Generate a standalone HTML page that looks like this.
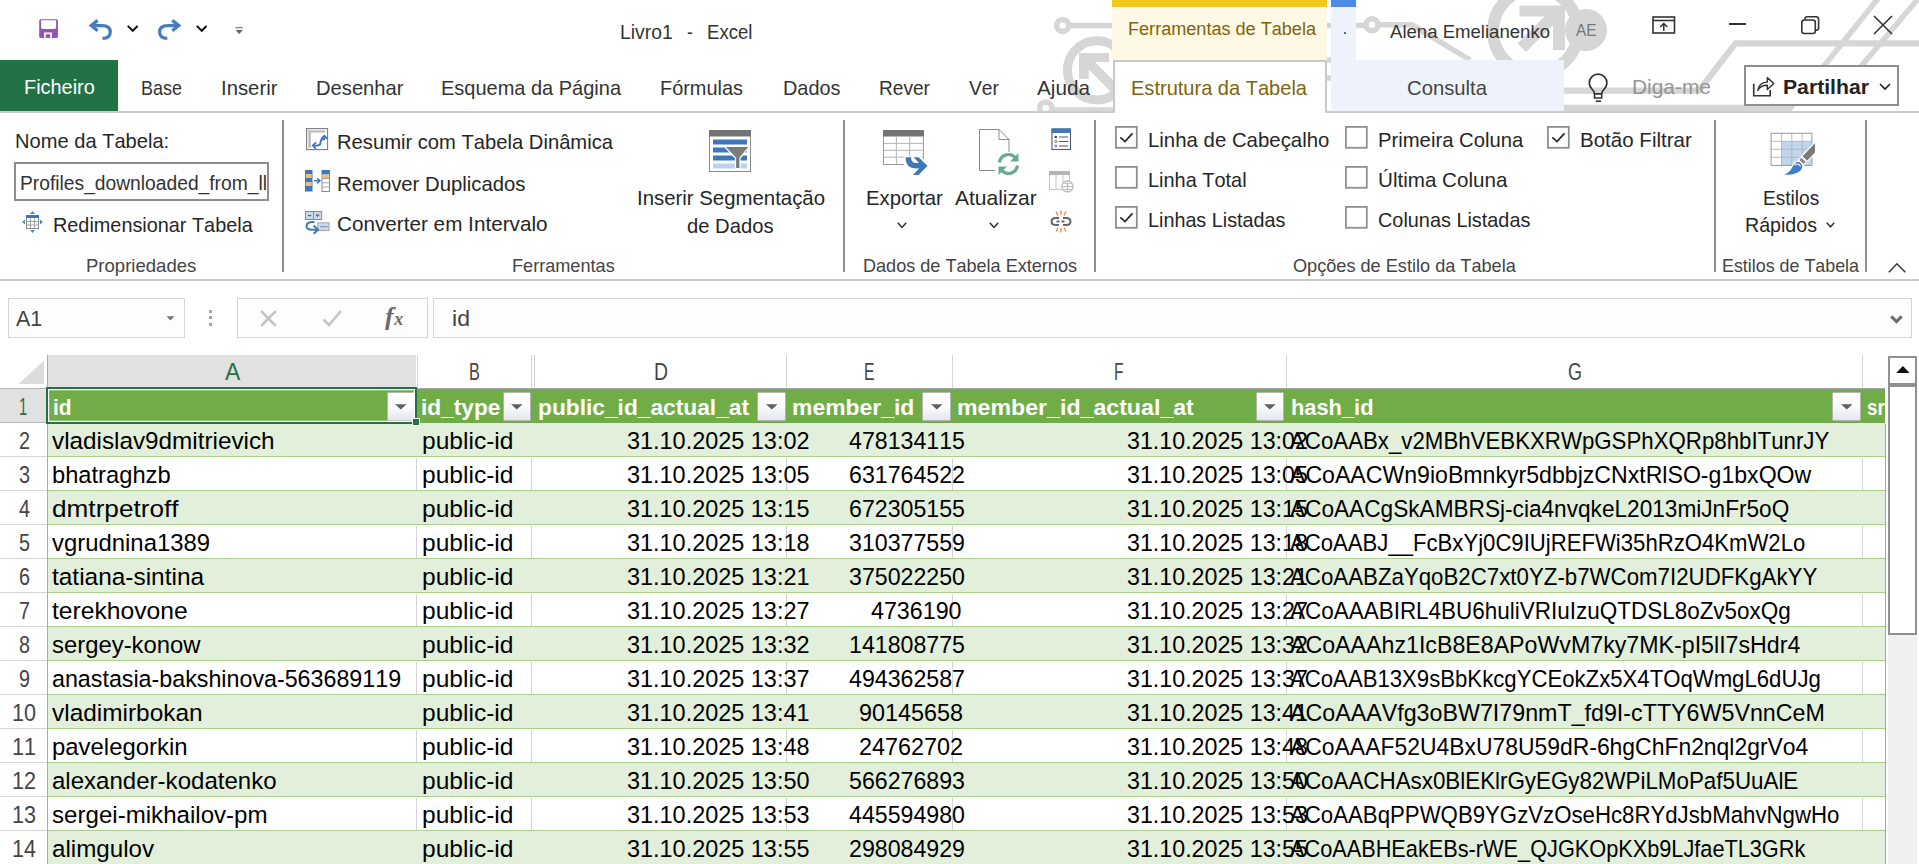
<!DOCTYPE html>
<html><head><meta charset="utf-8"><title>Livro1 - Excel</title>
<style>
html,body{margin:0;padding:0;overflow:hidden;}
body{width:1919px;height:864px;overflow:hidden;background:#fff;position:relative;font-family:"Liberation Sans",sans-serif;}
.t{position:absolute;white-space:pre;line-height:1;transform-origin:0 0;font-kerning:none;}
</style></head><body>
<svg style="position:absolute;left:0px;top:0px;" width="1919" height="112" viewBox="0 0 1919 112">
<g fill="none" stroke="#d6d6d6" stroke-width="5.5" stroke-linecap="butt" stroke-linejoin="miter">
  <circle cx="1062.6" cy="25.4" r="6"/>
  <path d="M1068.5 25.4 H1112"/>
  <path d="M1327 25.4 H1366"/>
  <circle cx="1372" cy="24.8" r="6"/>
  <path d="M1378 24.8 H1412 L1470 60"/>
  <circle cx="1097" cy="70.3" r="29.6" stroke-width="9"/>
  <circle cx="1045.7" cy="108" r="6"/>
  <path d="M1052 110 H1113"/>
  <path d="M1326 60 H1332 M1326 78 H1332"/>
  <circle cx="1535.5" cy="31" r="42.5" stroke-width="12"/>
  <path d="M1564 90.7 H1699 L1735.5 43.4 H1919" stroke-width="6.2"/>
  <path d="M1564 108 H1790.5" stroke-width="6.5"/><path d="M1788 111 L1880 -4"/>
  <path d="M1923 -7 L1858 70"/>
</g>
<g fill="#d6d6d6" stroke="none">
  <path d="M1079 53 H1109 V62 H1095 L1120 87 L1113 94 L1088.8 69.5 V79 H1079 Z"/>
  <path d="M1519.5 5.4 H1565 V50 H1553 V25 L1526 52 L1517.5 43.5 L1544.5 16.6 H1519.5 Z"/>
</g></svg>
<svg style="position:absolute;left:39px;top:18.8px;" width="19.2" height="19.2" viewBox="0 0 19.2 19.2"><rect x="0.2" y="0.2" width="18.7" height="18.8" rx="1.6" fill="#9153b5"/><path d="M2.1 1.3 H17.1 V8.6 Q17.1 10.1 15.6 10.1 H3.6 Q2.1 10.1 2.1 8.6 Z" fill="#fff"/><path d="M5 19 V13.6 H13 V19 H11.3 V15.2 H6.7 V19 Z" fill="#fff"/></svg>
<svg style="position:absolute;left:88px;top:18px;" width="26" height="23" viewBox="0 0 26 23"><path d="M3.4 7.6 H14 Q22.3 7.6 22.3 14 Q22.3 20.3 14.6 20.3" fill="none" stroke="#467ebd" stroke-width="3.2"/><path d="M9.6 2.4 L3.2 7.6 L9.6 12.8" fill="none" stroke="#467ebd" stroke-width="3.3"/></svg>
<svg style="position:absolute;left:126.6px;top:25.4px;" width="11.4" height="7.4" viewBox="0 0 11.4 7.4"><path d="M0.8 0.9 L5.7 5.8 L10.6 0.9" fill="none" stroke="#111" stroke-width="2"/></svg>
<svg style="position:absolute;left:157px;top:18px;" width="26" height="23" viewBox="0 0 26 23"><path d="M21.5 7.6 H10.9 Q2.6 7.6 2.6 14 Q2.6 20.3 10.3 20.3" fill="none" stroke="#467ebd" stroke-width="3.2"/><path d="M15.3 2.4 L21.7 7.6 L15.3 12.8" fill="none" stroke="#467ebd" stroke-width="3.3"/></svg>
<svg style="position:absolute;left:195.6px;top:25.4px;" width="11.4" height="7.4" viewBox="0 0 11.4 7.4"><path d="M0.8 0.9 L5.7 5.8 L10.6 0.9" fill="none" stroke="#111" stroke-width="2"/></svg>
<svg style="position:absolute;left:234.6px;top:27px;" width="8.4" height="8" viewBox="0 0 8.4 8"><rect x="0.4" y="0.2" width="7.4" height="1" fill="#666"/><path d="M0.5 3 H7.9 L4.2 7 Z" fill="#666"/></svg>
<span class="t" style="left:619.6px;top:21px;font-size:21px;color:#333;transform:scaleX(0.9213);">Livro1</span>
<span class="t" style="left:687.3px;top:21px;font-size:21px;color:#333;transform:scaleX(0.8143);">-</span>
<span class="t" style="left:707.3px;top:21px;font-size:21px;color:#333;transform:scaleX(0.8840);">Excel</span>
<div style="position:absolute;left:1112px;top:0px;width:215px;height:60px;background:#fff8e4;"></div>
<div style="position:absolute;left:1112px;top:0px;width:215px;height:7px;background:#f2c81c;"></div>
<span class="t" style="left:1127.5px;top:20px;font-size:18px;color:#80640c;transform:scaleX(1.0048);">Ferramentas de Tabela</span>
<div style="position:absolute;left:1331px;top:0px;width:25px;height:60px;background:#eef3fb;"></div>
<div style="position:absolute;left:1331px;top:0px;width:25px;height:7px;background:#4d8ae6;"></div>
<div style="position:absolute;left:1344px;top:32px;width:2px;height:2px;background:#3b6fc4;"></div>
<span class="t" style="left:1390px;top:22px;font-size:19px;color:#333;transform:scaleX(0.9773);">Alena Emelianenko</span>
<div style="position:absolute;left:1565px;top:9px;width:42px;height:42px;border-radius:50%;background:#d6d6d6;"></div>
<span class="t" style="left:1576px;top:23px;font-size:16px;color:#777;transform:scaleX(0.9605);">AE</span>
<svg style="position:absolute;left:1652px;top:15px;" width="24" height="20" viewBox="0 0 24 20"><rect x="1" y="2" width="21.5" height="16" fill="none" stroke="#333" stroke-width="1.6"/><path d="M1 5.5 H22.5" stroke="#333" stroke-width="1.6"/><path d="M11.8 16 V8.5 M8.3 12 L11.8 8.5 L15.3 12" fill="none" stroke="#333" stroke-width="1.5"/></svg>
<div style="position:absolute;left:1729px;top:23.2px;width:17px;height:1.6px;background:#333;"></div>
<svg style="position:absolute;left:1800px;top:15px;" width="20" height="20" viewBox="0 0 20 20"><rect x="1.8" y="5" width="13.5" height="13.5" rx="2.5" fill="none" stroke="#333" stroke-width="1.6"/><path d="M5 4.5 V4 Q5 1.8 7.2 1.8 H16 Q18.6 1.8 18.6 4.4 V13 Q18.6 15.2 16.5 15.2 H16" fill="none" stroke="#333" stroke-width="1.6"/></svg>
<svg style="position:absolute;left:1873px;top:15px;" width="20" height="20" viewBox="0 0 20 20"><path d="M1 1 L19 19 M19 1 L1 19" stroke="#333" stroke-width="1.6"/></svg>
<div style="position:absolute;left:0px;top:60px;width:118px;height:51px;background:#217346;"></div>
<span class="t" style="left:24.2px;top:76px;font-size:21px;color:#fff;transform:scaleX(0.9478);">Ficheiro</span>
<span class="t" style="left:140.5px;top:77px;font-size:21px;color:#333;transform:scaleX(0.8564);">Base</span>
<span class="t" style="left:221px;top:77px;font-size:21px;color:#333;transform:scaleX(0.9681);">Inserir</span>
<span class="t" style="left:315.5px;top:77px;font-size:21px;color:#333;transform:scaleX(0.9609);">Desenhar</span>
<span class="t" style="left:441px;top:77px;font-size:21px;color:#333;transform:scaleX(0.9517);">Esquema da Página</span>
<span class="t" style="left:660px;top:77px;font-size:21px;color:#333;transform:scaleX(0.9482);">Fórmulas</span>
<span class="t" style="left:782.5px;top:77px;font-size:21px;color:#333;transform:scaleX(0.9472);">Dados</span>
<span class="t" style="left:879px;top:77px;font-size:21px;color:#333;transform:scaleX(0.9102);">Rever</span>
<span class="t" style="left:968.5px;top:77px;font-size:21px;color:#333;transform:scaleX(0.9178);">Ver</span>
<span class="t" style="left:1036.5px;top:77px;font-size:21px;color:#333;transform:scaleX(0.9866);">Ajuda</span>
<div style="position:absolute;left:0px;top:111px;width:1919px;height:2px;background:#cdcdcd;"></div>
<div style="position:absolute;left:1113px;top:60px;width:210px;height:51px;background:#fff;border:2px solid #c9c9c9;border-bottom:none;"></div>
<span class="t" style="left:1130.5px;top:77px;font-size:21px;color:#80640c;transform:scaleX(0.9543);">Estrutura da Tabela</span>
<div style="position:absolute;left:1331px;top:60px;width:233px;height:50.5px;background:#eef3fb;"></div>
<span class="t" style="left:1406.5px;top:77px;font-size:21px;color:#444;transform:scaleX(0.9651);">Consulta</span>
<svg style="position:absolute;left:1586px;top:73px;" width="24" height="30" viewBox="0 0 24 30"><path d="M8.5 20.9 Q8.3 18.2 6.4 16.6 A8.8 8.8 0 1 1 17.8 16.6 Q15.9 18.2 15.7 20.9" fill="none" stroke="#333" stroke-width="1.7"/><path d="M8.5 20.9 H15.7 V25 H8.5 Z" fill="none" stroke="#333" stroke-width="1.6"/><path d="M9.8 28.2 H15" stroke="#333" stroke-width="1.6"/></svg>
<span class="t" style="left:1632px;top:77px;font-size:20.3px;color:#949494;transform:scaleX(1.0308);">Diga-me</span>
<div style="position:absolute;left:1744px;top:65px;width:151px;height:37px;background:#fff;border:2px solid #8e8e8e;"></div>
<svg style="position:absolute;left:1750.6px;top:73.5px;" width="25" height="23" viewBox="0 0 26 24"><path d="M2.8 10.3 V22.7 H20 V16.8" fill="none" stroke="#333" stroke-width="1.7"/><path d="M7 17 Q8.5 8.5 17 8.5 V3.8 L23.8 10 L17 16.2 V11.8 Q10.5 11.5 7 17 Z" fill="none" stroke="#333" stroke-width="1.5" stroke-linejoin="round"/></svg>
<span class="t" style="left:1782.6px;top:76px;font-size:21px;color:#222;font-weight:700;transform:scaleX(1.0082);">Partilhar</span>
<svg style="position:absolute;left:1879px;top:83px;" width="12" height="8" viewBox="0 0 12 8"><path d="M1 1 L6 6 L11 1" fill="none" stroke="#222" stroke-width="1.6"/></svg>
<span class="t" style="left:15.3px;top:131px;font-size:20.3px;color:#262626;transform:scaleX(0.9911);">Nome da Tabela:</span>
<div style="position:absolute;left:14px;top:162.3px;width:251.4px;height:34.8px;background:#fff;border:2px solid #8e8e8e;"></div>
<div style="position:absolute;left:0;top:0;width:265.8px;height:864px;overflow:hidden;"><span class="t" style="left:20px;top:174px;font-size:19.5px;color:#333;transform:scaleX(0.9864);">Profiles_downloaded_from_ll</span></div>
<svg style="position:absolute;left:22px;top:211px;" width="21" height="22" viewBox="0 0 21 22"><rect x="4.5" y="4.5" width="12" height="13" fill="#fff" stroke="#8a8a8a" stroke-width="1"/>
<rect x="4" y="4" width="13" height="3" fill="#3f78b9"/>
<path d="M4.5 10.5 H16.5 M4.5 14 H16.5 M8.5 7 V17.5 M12.5 7 V17.5" stroke="#9a9a9a" stroke-width="0.9"/>
<path d="M10.5 0 L13 3 H8 Z M10.5 22 L13 19 H8 Z M0 11 L3 8.5 V13.5 Z M21 11 L18 8.5 V13.5 Z" fill="#4a86c8"/></svg>
<span class="t" style="left:53.3px;top:215px;font-size:20.3px;color:#262626;transform:scaleX(0.9786);">Redimensionar Tabela</span>
<span class="t" style="left:86px;top:257px;font-size:18.6px;color:#444;transform:scaleX(0.9972);">Propriedades</span>
<div style="position:absolute;left:282px;top:120px;width:2px;height:152px;background:#8e8e8e;"></div>
<svg style="position:absolute;left:306px;top:128px;" width="22.5" height="22.5" viewBox="0 0 22.5 22.5"><rect x="0.6" y="0.6" width="21" height="21" fill="#fff" stroke="#7d7d7d" stroke-width="1.1"/>
<rect x="2.3" y="2.3" width="17" height="2.2" fill="#bdbdbd"/><rect x="2.3" y="2.3" width="2.6" height="17.4" fill="#bdbdbd"/>
<path d="M7.2 17.6 H10.5 Q14.6 17.6 14.6 14.2 Q14.6 11 18.3 11 V8.3" fill="none" stroke="#3f78b9" stroke-width="1.9"/>
<path d="M10 14.3 L6.8 17.6 L10 20.8 M15.2 10.8 L18.3 7.7 L21.4 10.8" fill="none" stroke="#3f78b9" stroke-width="1.8"/></svg>
<span class="t" style="left:336.7px;top:132px;font-size:20.3px;color:#262626;transform:scaleX(0.9954);">Resumir com Tabela Dinâmica</span>
<svg style="position:absolute;left:304.5px;top:170px;" width="25" height="22" viewBox="0 0 25 22"><rect x="0" y="0" width="7.5" height="21.5" fill="#3f78b9"/>
<rect x="0.8" y="4" width="6" height="4" fill="#f0c070"/><rect x="0.8" y="12" width="6" height="4" fill="#f0c070"/>
<rect x="17" y="0" width="7.5" height="21.5" fill="#fff" stroke="#8a8a8a" stroke-width="1"/>
<rect x="17" y="0" width="7.5" height="4.5" fill="#3f78b9"/><rect x="17.6" y="4.6" width="6.3" height="3.6" fill="#f0c070"/>
<path d="M17 8.5 H24.5 M17 12.8 H24.5 M17 17 H24.5" stroke="#9a9a9a" stroke-width="0.9"/>
<path d="M9 10.8 H14.5 M12.3 8.2 L15 10.8 L12.3 13.4" fill="none" stroke="#3f78b9" stroke-width="1.5"/></svg>
<span class="t" style="left:336.7px;top:174px;font-size:20.3px;color:#262626;transform:scaleX(1.0013);">Remover Duplicados</span>
<svg style="position:absolute;left:305px;top:211px;" width="24.5" height="24" viewBox="0 0 24.5 24"><rect x="0.5" y="0.5" width="16.2" height="8" fill="#c9dbef" stroke="#8a8a8a" stroke-width="1"/>
<path d="M8.5 0.5 V8.5" stroke="#8a8a8a" stroke-width="1"/><path d="M2.8 4.6 H6.2" stroke="#555" stroke-width="1.1"/><path d="M10.3 3.4 H14.7 L12.5 6 Z" fill="#555"/>
<rect x="12.8" y="11.8" width="11.2" height="7.8" fill="#c9dbef" stroke="#9a9a9a" stroke-width="0.9"/>
<path d="M15 15.7 H22.5" stroke="#7a8ea8" stroke-width="1"/>
<path d="M9.5 11 Q1.5 10.5 1.5 15 Q1.5 18.7 7 18.7 H12" fill="none" stroke="#3f78b9" stroke-width="2"/>
<path d="M8.6 14.6 L13 18.7 L8.6 22.8" fill="none" stroke="#3f78b9" stroke-width="2"/></svg>
<span class="t" style="left:336.7px;top:214px;font-size:20.3px;color:#262626;transform:scaleX(1.0205);">Converter em Intervalo</span>
<span class="t" style="left:512.3px;top:257px;font-size:18.6px;color:#444;transform:scaleX(0.9743);">Ferramentas</span>
<svg style="position:absolute;left:709px;top:130px;" width="42" height="42" viewBox="0 0 42 42"><rect x="0.5" y="0.5" width="41" height="41" fill="#fff" stroke="#8a8a8a" stroke-width="1"/>
<rect x="0" y="0" width="42" height="6.5" fill="#737373"/>
<rect x="4" y="9.5" width="34" height="5" fill="#3f78b9"/>
<rect x="4" y="17.5" width="34" height="5" fill="#3f78b9"/>
<rect x="4" y="25.5" width="34" height="5" fill="#3f78b9"/>
<rect x="4" y="33.5" width="34" height="5" fill="#bcd3ea"/>
<path d="M15.5 16.5 H40.5 L31 28 V38.5 H26.5 V28 Z" fill="#7a7a7a" stroke="#fff" stroke-width="1.2"/></svg>
<span class="t" style="left:636.7px;top:188px;font-size:20.3px;color:#262626;transform:scaleX(1.0046);">Inserir Segmentação</span>
<span class="t" style="left:686.7px;top:216px;font-size:20.3px;color:#262626;transform:scaleX(0.9974);">de Dados</span>
<div style="position:absolute;left:843px;top:120px;width:2px;height:152px;background:#8e8e8e;"></div>
<svg style="position:absolute;left:882.5px;top:130px;" width="46" height="46" viewBox="0 0 46 46"><rect x="0.5" y="0.5" width="39.9" height="34" fill="#fff" stroke="#9a9a9a" stroke-width="1"/>
<rect x="0" y="0" width="40.9" height="6.5" fill="#737373"/>
<path d="M0.5 13.4 H40.4 M0.5 20.3 H40.4 M0.5 27.2 H40.4 M13.4 6.5 V34.5 M26.6 6.5 V34.5" stroke="#b4b4b4" stroke-width="1"/>
<path d="M21 26 H37 L46 34 V46 H26 L21 36 Z" fill="#fff"/>
<path d="M25.3 27.3 Q25.3 35.8 33.5 35.8 H39" fill="none" stroke="#3f78b9" stroke-width="5.4"/>
<path d="M30.6 27.3 H35.6 L44.6 35.8 L35.6 45 H30 L38.6 35.8 Z" fill="#3f78b9"/></svg>
<span class="t" style="left:865.7px;top:188px;font-size:20.3px;color:#262626;transform:scaleX(1.0019);">Exportar</span>
<svg style="position:absolute;left:896.8px;top:221.7px;" width="10" height="6.5" viewBox="0 0 10 6.5"><path d="M0.8 0.8 L5.0 5.5 L9.2 0.8" fill="none" stroke="#333" stroke-width="1.5"/></svg>
<svg style="position:absolute;left:978px;top:128px;" width="44" height="48" viewBox="0 0 44 48"><path d="M1.5 1.5 H21 L31 11.5 V42.5 H1.5 Z" fill="#fff" stroke="#8a8a8a" stroke-width="1"/>
<path d="M21 1.5 V11.5 H31" fill="none" stroke="#8a8a8a" stroke-width="1"/>
<rect x="17" y="24" width="26" height="24" fill="#fff"/>
<path d="M21.5 34.5 A9 9 0 0 1 37.5 30" fill="none" stroke="#69aa92" stroke-width="3.2"/>
<path d="M40.5 25 V33.5 H32 Z" fill="#69aa92"/>
<path d="M39.5 37.5 A9 9 0 0 1 23.5 42" fill="none" stroke="#69aa92" stroke-width="3.2"/>
<path d="M20.5 47 V38.5 H29 Z" fill="#69aa92"/></svg>
<span class="t" style="left:955px;top:188px;font-size:20.3px;color:#262626;transform:scaleX(1.0352);">Atualizar</span>
<svg style="position:absolute;left:989px;top:221.7px;" width="10" height="6.5" viewBox="0 0 10 6.5"><path d="M0.8 0.8 L5.0 5.5 L9.2 0.8" fill="none" stroke="#333" stroke-width="1.5"/></svg>
<svg style="position:absolute;left:1051px;top:128px;" width="21" height="23" viewBox="0 0 21 23"><rect x="1" y="1" width="18.5" height="20.5" fill="#fff" stroke="#4c5a6e" stroke-width="1.1"/>
<rect x="0.5" y="0.5" width="19.5" height="4.5" fill="#3f78b9"/>
<path d="M8 9 H17 M8 13.5 H17 M8 18 H17" stroke="#555" stroke-width="1.1"/>
<circle cx="4.8" cy="9" r="1.3" fill="#444"/><circle cx="4.8" cy="13.5" r="1.1" fill="none" stroke="#555" stroke-width="0.8"/><circle cx="4.8" cy="18" r="1.1" fill="none" stroke="#555" stroke-width="0.8"/></svg>
<svg style="position:absolute;left:1049px;top:170.5px;" width="26" height="23" viewBox="0 0 26 23"><rect x="0.5" y="0.5" width="20" height="18" fill="#fff" stroke="#c4c4c4" stroke-width="1"/>
<rect x="0" y="0" width="21" height="4" fill="#b4b4b4"/>
<path d="M7 4 V18.5 M14 4 V18.5" stroke="#d0c0d8" stroke-width="1"/>
<circle cx="18.5" cy="15.5" r="5.6" fill="#fff" stroke="#b4b4b4" stroke-width="1.1"/>
<path d="M13 15.5 H24 M18.5 10 V21 M15 12 Q18.5 14 22 12 M15 19 Q18.5 17 22 19" fill="none" stroke="#b4b4b4" stroke-width="0.9"/></svg>
<svg style="position:absolute;left:1050px;top:210px;" width="22" height="23" viewBox="0 0 22 23"><path d="M9 8 H6 Q1.5 8 1.5 11.5 Q1.5 15 6 15 H9 M13 8 H16 Q20.5 8 20.5 11.5 Q20.5 15 16 15 H13" fill="none" stroke="#666" stroke-width="2"/>
<path d="M6.5 11.5 H15.5" stroke="#666" stroke-width="1.8" stroke-dasharray="3 2"/>
<path d="M11 0.5 V5 M6 1.5 L8 5.5 M16 1.5 L14 5.5 M11 22.5 V18 M6 21.5 L8 17.5 M16 21.5 L14 17.5" stroke="#e8842c" stroke-width="1.2"/></svg>
<span class="t" style="left:862.7px;top:257px;font-size:18.6px;color:#444;transform:scaleX(0.9720);">Dados de Tabela Externos</span>
<div style="position:absolute;left:1094px;top:120px;width:2px;height:152px;background:#8e8e8e;"></div>
<svg style="position:absolute;left:1115px;top:126.2px;" width="22.7" height="22.7" viewBox="0 0 22.7 22.7"><rect x="0.9" y="0.9" width="20.9" height="20.9" fill="#fff" stroke="#8f8f8f" stroke-width="1.8"/><path d="M5.3 11.3 L10 15.6 L17.5 7.4" fill="none" stroke="#2b2b2b" stroke-width="1.8"/></svg>
<span class="t" style="left:1147.8px;top:130px;font-size:20.3px;color:#262626;transform:scaleX(1.0053);">Linha de Cabeçalho</span>
<svg style="position:absolute;left:1115px;top:166.2px;" width="22.7" height="22.7" viewBox="0 0 22.7 22.7"><rect x="0.9" y="0.9" width="20.9" height="20.9" fill="#fff" stroke="#8f8f8f" stroke-width="1.8"/></svg>
<span class="t" style="left:1147.8px;top:170px;font-size:20.3px;color:#262626;transform:scaleX(0.9825);">Linha Total</span>
<svg style="position:absolute;left:1115px;top:206.2px;" width="22.7" height="22.7" viewBox="0 0 22.7 22.7"><rect x="0.9" y="0.9" width="20.9" height="20.9" fill="#fff" stroke="#8f8f8f" stroke-width="1.8"/><path d="M5.3 11.3 L10 15.6 L17.5 7.4" fill="none" stroke="#2b2b2b" stroke-width="1.8"/></svg>
<span class="t" style="left:1147.8px;top:210px;font-size:20.3px;color:#262626;transform:scaleX(0.9748);">Linhas Listadas</span>
<svg style="position:absolute;left:1345.2px;top:126.2px;" width="22.7" height="22.7" viewBox="0 0 22.7 22.7"><rect x="0.9" y="0.9" width="20.9" height="20.9" fill="#fff" stroke="#8f8f8f" stroke-width="1.8"/></svg>
<span class="t" style="left:1377.8px;top:130px;font-size:20.3px;color:#262626;transform:scaleX(0.9986);">Primeira Coluna</span>
<svg style="position:absolute;left:1345.2px;top:166.2px;" width="22.7" height="22.7" viewBox="0 0 22.7 22.7"><rect x="0.9" y="0.9" width="20.9" height="20.9" fill="#fff" stroke="#8f8f8f" stroke-width="1.8"/></svg>
<span class="t" style="left:1377.8px;top:170px;font-size:20.3px;color:#262626;transform:scaleX(1.0159);">Última Coluna</span>
<svg style="position:absolute;left:1345.2px;top:206.2px;" width="22.7" height="22.7" viewBox="0 0 22.7 22.7"><rect x="0.9" y="0.9" width="20.9" height="20.9" fill="#fff" stroke="#8f8f8f" stroke-width="1.8"/></svg>
<span class="t" style="left:1377.8px;top:210px;font-size:20.3px;color:#262626;transform:scaleX(0.9795);">Colunas Listadas</span>
<svg style="position:absolute;left:1547.2px;top:126.2px;" width="22.7" height="22.7" viewBox="0 0 22.7 22.7"><rect x="0.9" y="0.9" width="20.9" height="20.9" fill="#fff" stroke="#8f8f8f" stroke-width="1.8"/><path d="M5.3 11.3 L10 15.6 L17.5 7.4" fill="none" stroke="#2b2b2b" stroke-width="1.8"/></svg>
<span class="t" style="left:1579.7px;top:130px;font-size:20.3px;color:#262626;transform:scaleX(1.0121);">Botão Filtrar</span>
<span class="t" style="left:1293.3px;top:257px;font-size:18.6px;color:#444;transform:scaleX(0.9753);">Opções de Estilo da Tabela</span>
<div style="position:absolute;left:1714px;top:120px;width:2px;height:152px;background:#8e8e8e;"></div>
<svg style="position:absolute;left:1770px;top:132px;" width="48" height="46" viewBox="0 0 48 46"><rect x="1.1" y="1.3" width="40.8" height="32.1" fill="#fff"/>
<rect x="11.5" y="9.3" width="30.4" height="24.1" fill="#c0d6ee"/>
<path d="M1.1 9.3 H41.9 M1.1 17.3 H41.9 M1.1 25.3 H41.9 M11.5 1.3 V33.4 M21.8 1.3 V33.4 M32.1 1.3 V33.4" stroke="#b4b4b4" stroke-width="0.9"/>
<rect x="1.1" y="1.3" width="40.8" height="32.1" fill="none" stroke="#9a9a9a" stroke-width="1"/>
<path d="M45.6 9.6 V20.6 L37.2 29.6 L31.6 24.4 Z" fill="#7a7a7a" stroke="#fff" stroke-width="1.3"/>
<path d="M31.4 24.8 L36.6 29.8 L33.4 33 L28.2 28 Z" fill="#8c8c8c" stroke="#fff" stroke-width="1.2"/>
<path d="M29.5 29.2 Q35.5 33.5 31 39 Q25.5 44.5 11.5 43 Q19.5 40.5 21.5 35.5 Q24 29 29.5 29.2 Z" fill="#3f7fc4" stroke="#fff" stroke-width="1.2"/>
<path d="M24.2 33.2 Q28 30.5 30.6 34.2" fill="none" stroke="#fff" stroke-width="1.1"/></svg>
<span class="t" style="left:1763.3px;top:188px;font-size:20.3px;color:#262626;transform:scaleX(0.9423);">Estilos</span>
<span class="t" style="left:1745.4px;top:215px;font-size:20.3px;color:#262626;transform:scaleX(0.9675);">Rápidos</span>
<svg style="position:absolute;left:1826.3px;top:222px;" width="9" height="5.8" viewBox="0 0 9 5.8"><path d="M0.8 0.8 L4.5 4.8 L8.2 0.8" fill="none" stroke="#333" stroke-width="1.5"/></svg>
<span class="t" style="left:1722.3px;top:257px;font-size:18.6px;color:#444;transform:scaleX(0.9605);">Estilos de Tabela</span>
<div style="position:absolute;left:1865px;top:120px;width:2px;height:152px;background:#8e8e8e;"></div>
<svg style="position:absolute;left:1887.5px;top:262px;" width="18.5" height="11.5" viewBox="0 0 18.5 11.5"><path d="M0.9 10.2 L8.9 1.8 L17.3 10.2" fill="none" stroke="#3a3a3a" stroke-width="1.6"/></svg>
<div style="position:absolute;left:0px;top:279px;width:1919px;height:2px;background:#cbcbcb;"></div>
<div style="position:absolute;left:8px;top:298px;width:174.8px;height:37.80000000000001px;background:#fdfdfd;border:1px solid #d4d4d4;"></div>
<span class="t" style="left:15.5px;top:308px;font-size:22px;color:#444;transform:scaleX(0.9769);">A1</span>
<svg style="position:absolute;left:166px;top:316px;" width="9" height="5" viewBox="0 0 9 5"><path d="M0.5 0.3 H8.5 L4.5 4.6 Z" fill="#777"/></svg>
<div style="position:absolute;left:208.8px;top:309.7px;width:3px;height:3px;background:#a6a6a6;"></div>
<div style="position:absolute;left:208.8px;top:316.3px;width:3px;height:3px;background:#a6a6a6;"></div>
<div style="position:absolute;left:208.8px;top:323px;width:3px;height:3px;background:#a6a6a6;"></div>
<div style="position:absolute;left:237px;top:298px;width:188.5px;height:37.80000000000001px;background:#fdfdfd;border:1px solid #d4d4d4;"></div>
<svg style="position:absolute;left:260px;top:310px;" width="17" height="17" viewBox="0 0 17 17"><path d="M1.2 1.2 L15.8 15.8 M15.8 1.2 L1.2 15.8" stroke="#c2c2c2" stroke-width="2.5"/></svg>
<svg style="position:absolute;left:322px;top:309px;" width="21" height="18" viewBox="0 0 21 18"><path d="M1.5 10.5 L7 16 L19 2" fill="none" stroke="#c6c6c6" stroke-width="2.6"/></svg>
<span class="t" style="left:385px;top:304px;font-size:26px;color:#6a6a6a;font-weight:700;font-family:'Liberation Serif',serif;font-style:italic;">f</span>
<span class="t" style="left:394.3px;top:310px;font-size:18px;color:#6a6a6a;font-weight:700;font-family:'Liberation Serif',serif;font-style:italic;">x</span>
<div style="position:absolute;left:432.7px;top:298px;width:1477.3px;height:37.80000000000001px;background:#fdfdfd;border:1px solid #d4d4d4;"></div>
<span class="t" style="left:452.3px;top:308px;font-size:22px;color:#444;transform:scaleX(1.0511);">id</span>
<svg style="position:absolute;left:1890.3px;top:314.5px;" width="13" height="9" viewBox="0 0 13 9"><path d="M1.3 1.4 L6.5 6.6 L11.7 1.4" fill="none" stroke="#6a6a6a" stroke-width="2.9"/></svg>
<svg style="position:absolute;left:17px;top:359px;" width="28" height="26" viewBox="0 0 28 26"><path d="M27 1.5 V25 H1.5 Z" fill="#dcdcdc"/></svg>
<div style="position:absolute;left:47px;top:355px;width:369.2px;height:33px;background:#e1e1e1;"></div>
<span class="t" style="left:225px;top:361px;font-size:23px;color:#217346;transform:scaleX(0.9971);">A</span>
<span class="t" style="left:469.2px;top:361px;font-size:23px;color:#444;transform:scaleX(0.7039);">B</span>
<span class="t" style="left:653.5px;top:361px;font-size:23px;color:#444;transform:scaleX(0.8421);">D</span>
<span class="t" style="left:864px;top:361px;font-size:23px;color:#444;transform:scaleX(0.6843);">E</span>
<span class="t" style="left:1114px;top:361px;font-size:23px;color:#444;transform:scaleX(0.6756);">F</span>
<span class="t" style="left:1567.5px;top:361px;font-size:23px;color:#444;transform:scaleX(0.7825);">G</span>
<div style="position:absolute;left:416.5px;top:355px;width:1px;height:33px;background:#d4d4d4;"></div>
<div style="position:absolute;left:530.5px;top:355px;width:1px;height:33px;background:#d4d4d4;"></div>
<div style="position:absolute;left:534px;top:355px;width:1px;height:33px;background:#d4d4d4;"></div>
<div style="position:absolute;left:786px;top:355px;width:1px;height:33px;background:#d4d4d4;"></div>
<div style="position:absolute;left:951.5px;top:355px;width:1px;height:33px;background:#d4d4d4;"></div>
<div style="position:absolute;left:1285.5px;top:355px;width:1px;height:33px;background:#d4d4d4;"></div>
<div style="position:absolute;left:1861.5px;top:355px;width:1px;height:33px;background:#d4d4d4;"></div>
<div style="position:absolute;left:47.6px;top:388px;width:1837.7px;height:1.1px;background:#a8a8a8;"></div>
<div style="position:absolute;left:0px;top:388px;width:46.5px;height:35px;background:#e1e1e1;"></div>
<div style="position:absolute;left:0px;top:388px;width:46.5px;height:1px;background:#b6b6b6;"></div>
<div style="position:absolute;left:0px;top:422px;width:46.5px;height:1px;background:#b6b6b6;"></div>
<span class="t" style="left:19.2px;top:396px;font-size:23px;color:#217346;transform:scaleX(0.6408);">1</span>
<span class="t" style="left:18.5px;top:430px;font-size:23px;color:#444;transform:scaleX(0.8596);">2</span>
<div style="position:absolute;left:0px;top:456px;width:47px;height:1px;background:#d4d4d4;"></div>
<span class="t" style="left:18.5px;top:464px;font-size:23px;color:#444;transform:scaleX(0.8596);">3</span>
<div style="position:absolute;left:0px;top:490px;width:47px;height:1px;background:#d4d4d4;"></div>
<span class="t" style="left:18.5px;top:498px;font-size:23px;color:#444;transform:scaleX(0.8596);">4</span>
<div style="position:absolute;left:0px;top:524px;width:47px;height:1px;background:#d4d4d4;"></div>
<span class="t" style="left:18.5px;top:532px;font-size:23px;color:#444;transform:scaleX(0.8596);">5</span>
<div style="position:absolute;left:0px;top:558px;width:47px;height:1px;background:#d4d4d4;"></div>
<span class="t" style="left:18.5px;top:566px;font-size:23px;color:#444;transform:scaleX(0.8596);">6</span>
<div style="position:absolute;left:0px;top:592px;width:47px;height:1px;background:#d4d4d4;"></div>
<span class="t" style="left:18.5px;top:600px;font-size:23px;color:#444;transform:scaleX(0.8596);">7</span>
<div style="position:absolute;left:0px;top:626px;width:47px;height:1px;background:#d4d4d4;"></div>
<span class="t" style="left:18.5px;top:634px;font-size:23px;color:#444;transform:scaleX(0.8596);">8</span>
<div style="position:absolute;left:0px;top:660px;width:47px;height:1px;background:#d4d4d4;"></div>
<span class="t" style="left:18.5px;top:668px;font-size:23px;color:#444;transform:scaleX(0.8596);">9</span>
<div style="position:absolute;left:0px;top:694px;width:47px;height:1px;background:#d4d4d4;"></div>
<span class="t" style="left:12.0px;top:702px;font-size:23px;color:#444;transform:scaleX(0.9377);">10</span>
<div style="position:absolute;left:0px;top:728px;width:47px;height:1px;background:#d4d4d4;"></div>
<span class="t" style="left:12.0px;top:736px;font-size:23px;color:#444;transform:scaleX(0.9377);">11</span>
<div style="position:absolute;left:0px;top:762px;width:47px;height:1px;background:#d4d4d4;"></div>
<span class="t" style="left:12.0px;top:770px;font-size:23px;color:#444;transform:scaleX(0.9377);">12</span>
<div style="position:absolute;left:0px;top:796px;width:47px;height:1px;background:#d4d4d4;"></div>
<span class="t" style="left:12.0px;top:804px;font-size:23px;color:#444;transform:scaleX(0.9377);">13</span>
<div style="position:absolute;left:0px;top:830px;width:47px;height:1px;background:#d4d4d4;"></div>
<span class="t" style="left:12.0px;top:838px;font-size:23px;color:#444;transform:scaleX(0.9377);">14</span>
<div style="position:absolute;left:0px;top:864px;width:47px;height:1px;background:#d4d4d4;"></div>
<div style="position:absolute;left:47px;top:389px;width:1838.3px;height:34px;background:#70ad47;"></div>
<div style="position:absolute;left:47px;top:423px;width:1838.3px;height:33px;background:#e2efda;"></div>
<div style="position:absolute;left:47px;top:456px;width:1838.3px;height:1px;background:#a9d08e;"></div>
<div style="position:absolute;left:416px;top:458px;width:1px;height:32px;background:#d4d4d4;"></div>
<div style="position:absolute;left:531px;top:458px;width:1px;height:32px;background:#d4d4d4;"></div>
<div style="position:absolute;left:786px;top:458px;width:1px;height:32px;background:#d4d4d4;"></div>
<div style="position:absolute;left:951.5px;top:458px;width:1px;height:32px;background:#d4d4d4;"></div>
<div style="position:absolute;left:1285.5px;top:458px;width:1px;height:32px;background:#d4d4d4;"></div>
<div style="position:absolute;left:1861.5px;top:458px;width:1px;height:32px;background:#d4d4d4;"></div>
<div style="position:absolute;left:47px;top:490px;width:1838.3px;height:1px;background:#a9d08e;"></div>
<div style="position:absolute;left:47px;top:491px;width:1838.3px;height:33px;background:#e2efda;"></div>
<div style="position:absolute;left:47px;top:524px;width:1838.3px;height:1px;background:#a9d08e;"></div>
<div style="position:absolute;left:416px;top:526px;width:1px;height:32px;background:#d4d4d4;"></div>
<div style="position:absolute;left:531px;top:526px;width:1px;height:32px;background:#d4d4d4;"></div>
<div style="position:absolute;left:786px;top:526px;width:1px;height:32px;background:#d4d4d4;"></div>
<div style="position:absolute;left:951.5px;top:526px;width:1px;height:32px;background:#d4d4d4;"></div>
<div style="position:absolute;left:1285.5px;top:526px;width:1px;height:32px;background:#d4d4d4;"></div>
<div style="position:absolute;left:1861.5px;top:526px;width:1px;height:32px;background:#d4d4d4;"></div>
<div style="position:absolute;left:47px;top:558px;width:1838.3px;height:1px;background:#a9d08e;"></div>
<div style="position:absolute;left:47px;top:559px;width:1838.3px;height:33px;background:#e2efda;"></div>
<div style="position:absolute;left:47px;top:592px;width:1838.3px;height:1px;background:#a9d08e;"></div>
<div style="position:absolute;left:416px;top:594px;width:1px;height:32px;background:#d4d4d4;"></div>
<div style="position:absolute;left:531px;top:594px;width:1px;height:32px;background:#d4d4d4;"></div>
<div style="position:absolute;left:786px;top:594px;width:1px;height:32px;background:#d4d4d4;"></div>
<div style="position:absolute;left:951.5px;top:594px;width:1px;height:32px;background:#d4d4d4;"></div>
<div style="position:absolute;left:1285.5px;top:594px;width:1px;height:32px;background:#d4d4d4;"></div>
<div style="position:absolute;left:1861.5px;top:594px;width:1px;height:32px;background:#d4d4d4;"></div>
<div style="position:absolute;left:47px;top:626px;width:1838.3px;height:1px;background:#a9d08e;"></div>
<div style="position:absolute;left:47px;top:627px;width:1838.3px;height:33px;background:#e2efda;"></div>
<div style="position:absolute;left:47px;top:660px;width:1838.3px;height:1px;background:#a9d08e;"></div>
<div style="position:absolute;left:416px;top:662px;width:1px;height:32px;background:#d4d4d4;"></div>
<div style="position:absolute;left:531px;top:662px;width:1px;height:32px;background:#d4d4d4;"></div>
<div style="position:absolute;left:786px;top:662px;width:1px;height:32px;background:#d4d4d4;"></div>
<div style="position:absolute;left:951.5px;top:662px;width:1px;height:32px;background:#d4d4d4;"></div>
<div style="position:absolute;left:1285.5px;top:662px;width:1px;height:32px;background:#d4d4d4;"></div>
<div style="position:absolute;left:1861.5px;top:662px;width:1px;height:32px;background:#d4d4d4;"></div>
<div style="position:absolute;left:47px;top:694px;width:1838.3px;height:1px;background:#a9d08e;"></div>
<div style="position:absolute;left:47px;top:695px;width:1838.3px;height:33px;background:#e2efda;"></div>
<div style="position:absolute;left:47px;top:728px;width:1838.3px;height:1px;background:#a9d08e;"></div>
<div style="position:absolute;left:416px;top:730px;width:1px;height:32px;background:#d4d4d4;"></div>
<div style="position:absolute;left:531px;top:730px;width:1px;height:32px;background:#d4d4d4;"></div>
<div style="position:absolute;left:786px;top:730px;width:1px;height:32px;background:#d4d4d4;"></div>
<div style="position:absolute;left:951.5px;top:730px;width:1px;height:32px;background:#d4d4d4;"></div>
<div style="position:absolute;left:1285.5px;top:730px;width:1px;height:32px;background:#d4d4d4;"></div>
<div style="position:absolute;left:1861.5px;top:730px;width:1px;height:32px;background:#d4d4d4;"></div>
<div style="position:absolute;left:47px;top:762px;width:1838.3px;height:1px;background:#a9d08e;"></div>
<div style="position:absolute;left:47px;top:763px;width:1838.3px;height:33px;background:#e2efda;"></div>
<div style="position:absolute;left:47px;top:796px;width:1838.3px;height:1px;background:#a9d08e;"></div>
<div style="position:absolute;left:416px;top:798px;width:1px;height:32px;background:#d4d4d4;"></div>
<div style="position:absolute;left:531px;top:798px;width:1px;height:32px;background:#d4d4d4;"></div>
<div style="position:absolute;left:786px;top:798px;width:1px;height:32px;background:#d4d4d4;"></div>
<div style="position:absolute;left:951.5px;top:798px;width:1px;height:32px;background:#d4d4d4;"></div>
<div style="position:absolute;left:1285.5px;top:798px;width:1px;height:32px;background:#d4d4d4;"></div>
<div style="position:absolute;left:1861.5px;top:798px;width:1px;height:32px;background:#d4d4d4;"></div>
<div style="position:absolute;left:47px;top:830px;width:1838.3px;height:1px;background:#a9d08e;"></div>
<div style="position:absolute;left:47px;top:831px;width:1838.3px;height:33px;background:#e2efda;"></div>
<div style="position:absolute;left:47px;top:864px;width:1838.3px;height:1px;background:#a9d08e;"></div>
<div style="position:absolute;left:47.1px;top:355px;width:1px;height:509px;background:#ababab;"></div>
<span class="t" style="left:52.5px;top:396px;font-size:22.8px;color:#fff;font-weight:700;transform:scaleX(0.9227);">id</span>
<div style="position:absolute;left:386.8px;top:392.3px;width:26.599999999999966px;height:26.3px;border:1px solid #b4b4b4;border-radius:1px;background:linear-gradient(#ffffff,#fbfbfd 50%,#e4e6ee);"></div>
<svg style="position:absolute;left:395.3px;top:404.2px;" width="11.6" height="6" viewBox="0 0 11.6 6"><path d="M0 0.2 H11.6 L5.8 5.6 Z" fill="#606060"/></svg>
<span class="t" style="left:421.3px;top:396px;font-size:22.8px;color:#fff;font-weight:700;transform:scaleX(0.9961);">id_type</span>
<div style="position:absolute;left:502.8px;top:392.3px;width:26.599999999999966px;height:26.3px;border:1px solid #b4b4b4;border-radius:1px;background:linear-gradient(#ffffff,#fbfbfd 50%,#e4e6ee);"></div>
<svg style="position:absolute;left:511.3px;top:404.2px;" width="11.6" height="6" viewBox="0 0 11.6 6"><path d="M0 0.2 H11.6 L5.8 5.6 Z" fill="#606060"/></svg>
<span class="t" style="left:537.5px;top:396px;font-size:22.8px;color:#fff;font-weight:700;transform:scaleX(0.9973);">public_id_actual_at</span>
<div style="position:absolute;left:757.3px;top:392.3px;width:26.700000000000045px;height:26.3px;border:1px solid #b4b4b4;border-radius:1px;background:linear-gradient(#ffffff,#fbfbfd 50%,#e4e6ee);"></div>
<svg style="position:absolute;left:765.85px;top:404.2px;" width="11.6" height="6" viewBox="0 0 11.6 6"><path d="M0 0.2 H11.6 L5.8 5.6 Z" fill="#606060"/></svg>
<span class="t" style="left:791.7px;top:396px;font-size:22.8px;color:#fff;font-weight:700;transform:scaleX(1.0054);">member_id</span>
<div style="position:absolute;left:922px;top:392.3px;width:26.600000000000023px;height:26.3px;border:1px solid #b4b4b4;border-radius:1px;background:linear-gradient(#ffffff,#fbfbfd 50%,#e4e6ee);"></div>
<svg style="position:absolute;left:930.5px;top:404.2px;" width="11.6" height="6" viewBox="0 0 11.6 6"><path d="M0 0.2 H11.6 L5.8 5.6 Z" fill="#606060"/></svg>
<span class="t" style="left:956.7px;top:396px;font-size:22.8px;color:#fff;font-weight:700;transform:scaleX(1.0156);">member_id_actual_at</span>
<div style="position:absolute;left:1255.6px;top:392.3px;width:26.700000000000045px;height:26.3px;border:1px solid #b4b4b4;border-radius:1px;background:linear-gradient(#ffffff,#fbfbfd 50%,#e4e6ee);"></div>
<svg style="position:absolute;left:1264.1499999999999px;top:404.2px;" width="11.6" height="6" viewBox="0 0 11.6 6"><path d="M0 0.2 H11.6 L5.8 5.6 Z" fill="#606060"/></svg>
<span class="t" style="left:1291px;top:396px;font-size:22.8px;color:#fff;font-weight:700;transform:scaleX(0.9576);">hash_id</span>
<div style="position:absolute;left:1832.4px;top:392.3px;width:26.59999999999991px;height:26.3px;border:1px solid #b4b4b4;border-radius:1px;background:linear-gradient(#ffffff,#fbfbfd 50%,#e4e6ee);"></div>
<svg style="position:absolute;left:1840.9px;top:404.2px;" width="11.6" height="6" viewBox="0 0 11.6 6"><path d="M0 0.2 H11.6 L5.8 5.6 Z" fill="#606060"/></svg>
<div style="position:absolute;left:0;top:0;width:1885.3px;height:864px;overflow:hidden;"><span class="t" style="left:1866.8px;top:396px;font-size:22.8px;color:#fff;font-weight:700;transform:scaleX(0.8237);">src</span></div>
<div style="position:absolute;left:46.2px;top:387px;width:366.7px;height:32.6px;border:2.2px solid #217346;box-shadow:inset 0 0 0 1.2px #fff;"></div>
<div style="position:absolute;left:411.5px;top:417.5px;width:6px;height:6px;background:#217346;border:1px solid #fff;"></div>
<span class="t" style="left:52.4px;top:429px;font-size:24.5px;color:#000;transform:scaleX(0.9908);">vladislav9dmitrievich</span>
<span class="t" style="left:421.5px;top:429px;font-size:24.5px;color:#000;transform:scaleX(1.0027);">public-id</span>
<span class="t" style="left:627px;top:429px;font-size:24.5px;color:#000;transform:scaleX(0.9567);">31.10.2025 13:02</span>
<span class="t" style="left:848.6px;top:429px;font-size:24.5px;color:#000;transform:scaleX(0.9450);">478134115</span>
<span class="t" style="left:1126.7px;top:429px;font-size:24.5px;color:#000;transform:scaleX(0.9484);">31.10.2025 13:02</span>
<span class="t" style="left:1289.7px;top:429px;font-size:24.5px;color:#000;transform:scaleX(0.9084);">ACoAABx_v2MBhVEBKXRWpGSPhXQRp8hbITunrJY</span>
<span class="t" style="left:52.4px;top:463px;font-size:24.5px;color:#000;transform:scaleX(0.9673);">bhatraghzb</span>
<span class="t" style="left:421.5px;top:463px;font-size:24.5px;color:#000;transform:scaleX(1.0027);">public-id</span>
<span class="t" style="left:627px;top:463px;font-size:24.5px;color:#000;transform:scaleX(0.9567);">31.10.2025 13:05</span>
<span class="t" style="left:848.6px;top:463px;font-size:24.5px;color:#000;transform:scaleX(0.9450);">631764522</span>
<span class="t" style="left:1126.7px;top:463px;font-size:24.5px;color:#000;transform:scaleX(0.9484);">31.10.2025 13:05</span>
<span class="t" style="left:1289.7px;top:463px;font-size:24.5px;color:#000;transform:scaleX(0.9430);">ACoAACWn9ioBmnkyr5dbbjzCNxtRlSO-g1bxQOw</span>
<span class="t" style="left:52.4px;top:497px;font-size:24.5px;color:#000;transform:scaleX(1.0686);">dmtrpetroff</span>
<span class="t" style="left:421.5px;top:497px;font-size:24.5px;color:#000;transform:scaleX(1.0027);">public-id</span>
<span class="t" style="left:627px;top:497px;font-size:24.5px;color:#000;transform:scaleX(0.9567);">31.10.2025 13:15</span>
<span class="t" style="left:848.6px;top:497px;font-size:24.5px;color:#000;transform:scaleX(0.9450);">672305155</span>
<span class="t" style="left:1126.7px;top:497px;font-size:24.5px;color:#000;transform:scaleX(0.9484);">31.10.2025 13:15</span>
<span class="t" style="left:1289.7px;top:497px;font-size:24.5px;color:#000;transform:scaleX(0.9236);">ACoAACgSkAMBRSj-cia4nvqkeL2013miJnFr5oQ</span>
<span class="t" style="left:52.4px;top:531px;font-size:24.5px;color:#000;transform:scaleX(0.9753);">vgrudnina1389</span>
<span class="t" style="left:421.5px;top:531px;font-size:24.5px;color:#000;transform:scaleX(1.0027);">public-id</span>
<span class="t" style="left:627px;top:531px;font-size:24.5px;color:#000;transform:scaleX(0.9567);">31.10.2025 13:18</span>
<span class="t" style="left:848.6px;top:531px;font-size:24.5px;color:#000;transform:scaleX(0.9450);">310377559</span>
<span class="t" style="left:1126.7px;top:531px;font-size:24.5px;color:#000;transform:scaleX(0.9484);">31.10.2025 13:18</span>
<span class="t" style="left:1289.7px;top:531px;font-size:24.5px;color:#000;transform:scaleX(0.9032);">ACoAABJ__FcBxYj0C9IUjREFWi35hRzO4KmW2Lo</span>
<span class="t" style="left:52.4px;top:565px;font-size:24.5px;color:#000;transform:scaleX(0.9971);">tatiana-sintina</span>
<span class="t" style="left:421.5px;top:565px;font-size:24.5px;color:#000;transform:scaleX(1.0027);">public-id</span>
<span class="t" style="left:627px;top:565px;font-size:24.5px;color:#000;transform:scaleX(0.9567);">31.10.2025 13:21</span>
<span class="t" style="left:848.6px;top:565px;font-size:24.5px;color:#000;transform:scaleX(0.9450);">375022250</span>
<span class="t" style="left:1126.7px;top:565px;font-size:24.5px;color:#000;transform:scaleX(0.9484);">31.10.2025 13:21</span>
<span class="t" style="left:1289.7px;top:565px;font-size:24.5px;color:#000;transform:scaleX(0.9090);">ACoAABZaYqoB2C7xt0YZ-b7WCom7I2UDFKgAkYY</span>
<span class="t" style="left:52.4px;top:599px;font-size:24.5px;color:#000;transform:scaleX(1.0055);">terekhovone</span>
<span class="t" style="left:421.5px;top:599px;font-size:24.5px;color:#000;transform:scaleX(1.0027);">public-id</span>
<span class="t" style="left:627px;top:599px;font-size:24.5px;color:#000;transform:scaleX(0.9567);">31.10.2025 13:27</span>
<span class="t" style="left:870.5px;top:599px;font-size:24.5px;color:#000;transform:scaleX(0.9487);">4736190</span>
<span class="t" style="left:1126.7px;top:599px;font-size:24.5px;color:#000;transform:scaleX(0.9484);">31.10.2025 13:27</span>
<span class="t" style="left:1289.7px;top:599px;font-size:24.5px;color:#000;transform:scaleX(0.9171);">ACoAAABIRL4BU6huliVRIuIzuQTDSL8oZv5oxQg</span>
<span class="t" style="left:52.4px;top:633px;font-size:24.5px;color:#000;transform:scaleX(0.9743);">sergey-konow</span>
<span class="t" style="left:421.5px;top:633px;font-size:24.5px;color:#000;transform:scaleX(1.0027);">public-id</span>
<span class="t" style="left:627px;top:633px;font-size:24.5px;color:#000;transform:scaleX(0.9567);">31.10.2025 13:32</span>
<span class="t" style="left:848.6px;top:633px;font-size:24.5px;color:#000;transform:scaleX(0.9450);">141808775</span>
<span class="t" style="left:1126.7px;top:633px;font-size:24.5px;color:#000;transform:scaleX(0.9484);">31.10.2025 13:32</span>
<span class="t" style="left:1289.7px;top:633px;font-size:24.5px;color:#000;transform:scaleX(0.9464);">ACoAAAhz1IcB8E8APoWvM7ky7MK-pI5lI7sHdr4</span>
<span class="t" style="left:52.4px;top:667px;font-size:24.5px;color:#000;transform:scaleX(0.9492);">anastasia-bakshinova-563689119</span>
<span class="t" style="left:421.5px;top:667px;font-size:24.5px;color:#000;transform:scaleX(1.0027);">public-id</span>
<span class="t" style="left:627px;top:667px;font-size:24.5px;color:#000;transform:scaleX(0.9567);">31.10.2025 13:37</span>
<span class="t" style="left:848.6px;top:667px;font-size:24.5px;color:#000;transform:scaleX(0.9450);">494362587</span>
<span class="t" style="left:1126.7px;top:667px;font-size:24.5px;color:#000;transform:scaleX(0.9484);">31.10.2025 13:37</span>
<span class="t" style="left:1289.7px;top:667px;font-size:24.5px;color:#000;transform:scaleX(0.9044);">ACoAAB13X9sBbKkcgYCEokZx5X4TOqWmgL6dUJg</span>
<span class="t" style="left:52.4px;top:701px;font-size:24.5px;color:#000;transform:scaleX(0.9963);">vladimirbokan</span>
<span class="t" style="left:421.5px;top:701px;font-size:24.5px;color:#000;transform:scaleX(1.0027);">public-id</span>
<span class="t" style="left:627px;top:701px;font-size:24.5px;color:#000;transform:scaleX(0.9567);">31.10.2025 13:41</span>
<span class="t" style="left:859px;top:701px;font-size:24.5px;color:#000;transform:scaleX(0.9540);">90145658</span>
<span class="t" style="left:1126.7px;top:701px;font-size:24.5px;color:#000;transform:scaleX(0.9484);">31.10.2025 13:41</span>
<span class="t" style="left:1289.7px;top:701px;font-size:24.5px;color:#000;transform:scaleX(0.9487);">ACoAAAVfg3oBW7I79nmT_fd9I-cTTY6W5VnnCeM</span>
<span class="t" style="left:52.4px;top:735px;font-size:24.5px;color:#000;transform:scaleX(0.9760);">pavelegorkin</span>
<span class="t" style="left:421.5px;top:735px;font-size:24.5px;color:#000;transform:scaleX(1.0027);">public-id</span>
<span class="t" style="left:627px;top:735px;font-size:24.5px;color:#000;transform:scaleX(0.9567);">31.10.2025 13:48</span>
<span class="t" style="left:859px;top:735px;font-size:24.5px;color:#000;transform:scaleX(0.9540);">24762702</span>
<span class="t" style="left:1126.7px;top:735px;font-size:24.5px;color:#000;transform:scaleX(0.9484);">31.10.2025 13:48</span>
<span class="t" style="left:1289.7px;top:735px;font-size:24.5px;color:#000;transform:scaleX(0.9351);">ACoAAAF52U4BxU78U59dR-6hgChFn2nql2grVo4</span>
<span class="t" style="left:52.4px;top:769px;font-size:24.5px;color:#000;transform:scaleX(0.9815);">alexander-kodatenko</span>
<span class="t" style="left:421.5px;top:769px;font-size:24.5px;color:#000;transform:scaleX(1.0027);">public-id</span>
<span class="t" style="left:627px;top:769px;font-size:24.5px;color:#000;transform:scaleX(0.9567);">31.10.2025 13:50</span>
<span class="t" style="left:848.6px;top:769px;font-size:24.5px;color:#000;transform:scaleX(0.9450);">566276893</span>
<span class="t" style="left:1126.7px;top:769px;font-size:24.5px;color:#000;transform:scaleX(0.9484);">31.10.2025 13:50</span>
<span class="t" style="left:1289.7px;top:769px;font-size:24.5px;color:#000;transform:scaleX(0.9127);">ACoAACHAsx0BlEKlrGyEGy82WPiLMoPaf5UuAlE</span>
<span class="t" style="left:52.4px;top:803px;font-size:24.5px;color:#000;transform:scaleX(0.9836);">sergei-mikhailov-pm</span>
<span class="t" style="left:421.5px;top:803px;font-size:24.5px;color:#000;transform:scaleX(1.0027);">public-id</span>
<span class="t" style="left:627px;top:803px;font-size:24.5px;color:#000;transform:scaleX(0.9567);">31.10.2025 13:53</span>
<span class="t" style="left:848.6px;top:803px;font-size:24.5px;color:#000;transform:scaleX(0.9450);">445594980</span>
<span class="t" style="left:1126.7px;top:803px;font-size:24.5px;color:#000;transform:scaleX(0.9484);">31.10.2025 13:53</span>
<span class="t" style="left:1289.7px;top:803px;font-size:24.5px;color:#000;transform:scaleX(0.9066);">ACoAABqPPWQB9YGzVzOseHc8RYdJsbMahvNgwHo</span>
<span class="t" style="left:52.4px;top:837px;font-size:24.5px;color:#000;transform:scaleX(0.9865);">alimgulov</span>
<span class="t" style="left:421.5px;top:837px;font-size:24.5px;color:#000;transform:scaleX(1.0027);">public-id</span>
<span class="t" style="left:627px;top:837px;font-size:24.5px;color:#000;transform:scaleX(0.9567);">31.10.2025 13:55</span>
<span class="t" style="left:848.6px;top:837px;font-size:24.5px;color:#000;transform:scaleX(0.9450);">298084929</span>
<span class="t" style="left:1126.7px;top:837px;font-size:24.5px;color:#000;transform:scaleX(0.9484);">31.10.2025 13:55</span>
<span class="t" style="left:1289.7px;top:837px;font-size:24.5px;color:#000;transform:scaleX(0.8863);">ACoAABHEakEBs-rWE_QJGKOpKXb9LJfaeTL3GRk</span>
<div style="position:absolute;left:1885.2px;top:355px;width:33.799999999999955px;height:509px;background:#fff;"></div>
<div style="position:absolute;left:1885.2px;top:424px;width:0.9px;height:440px;background:#a6a6a6;"></div>
<div style="position:absolute;left:1888px;top:635px;width:29px;height:229px;background:#f0f0f0;"></div>
<div style="position:absolute;left:1888px;top:356px;width:25px;height:25px;background:#fff;border:2px solid #909090;"></div>
<svg style="position:absolute;left:1895.6px;top:365.8px;" width="13.8" height="7.2" viewBox="0 0 13.8 7.2"><path d="M6.9 0 L13.8 7.2 H0 Z" fill="#111"/></svg>
<div style="position:absolute;left:1888px;top:385px;width:25px;height:246px;background:#fff;border:2px solid #909090;"></div>
</body></html>
